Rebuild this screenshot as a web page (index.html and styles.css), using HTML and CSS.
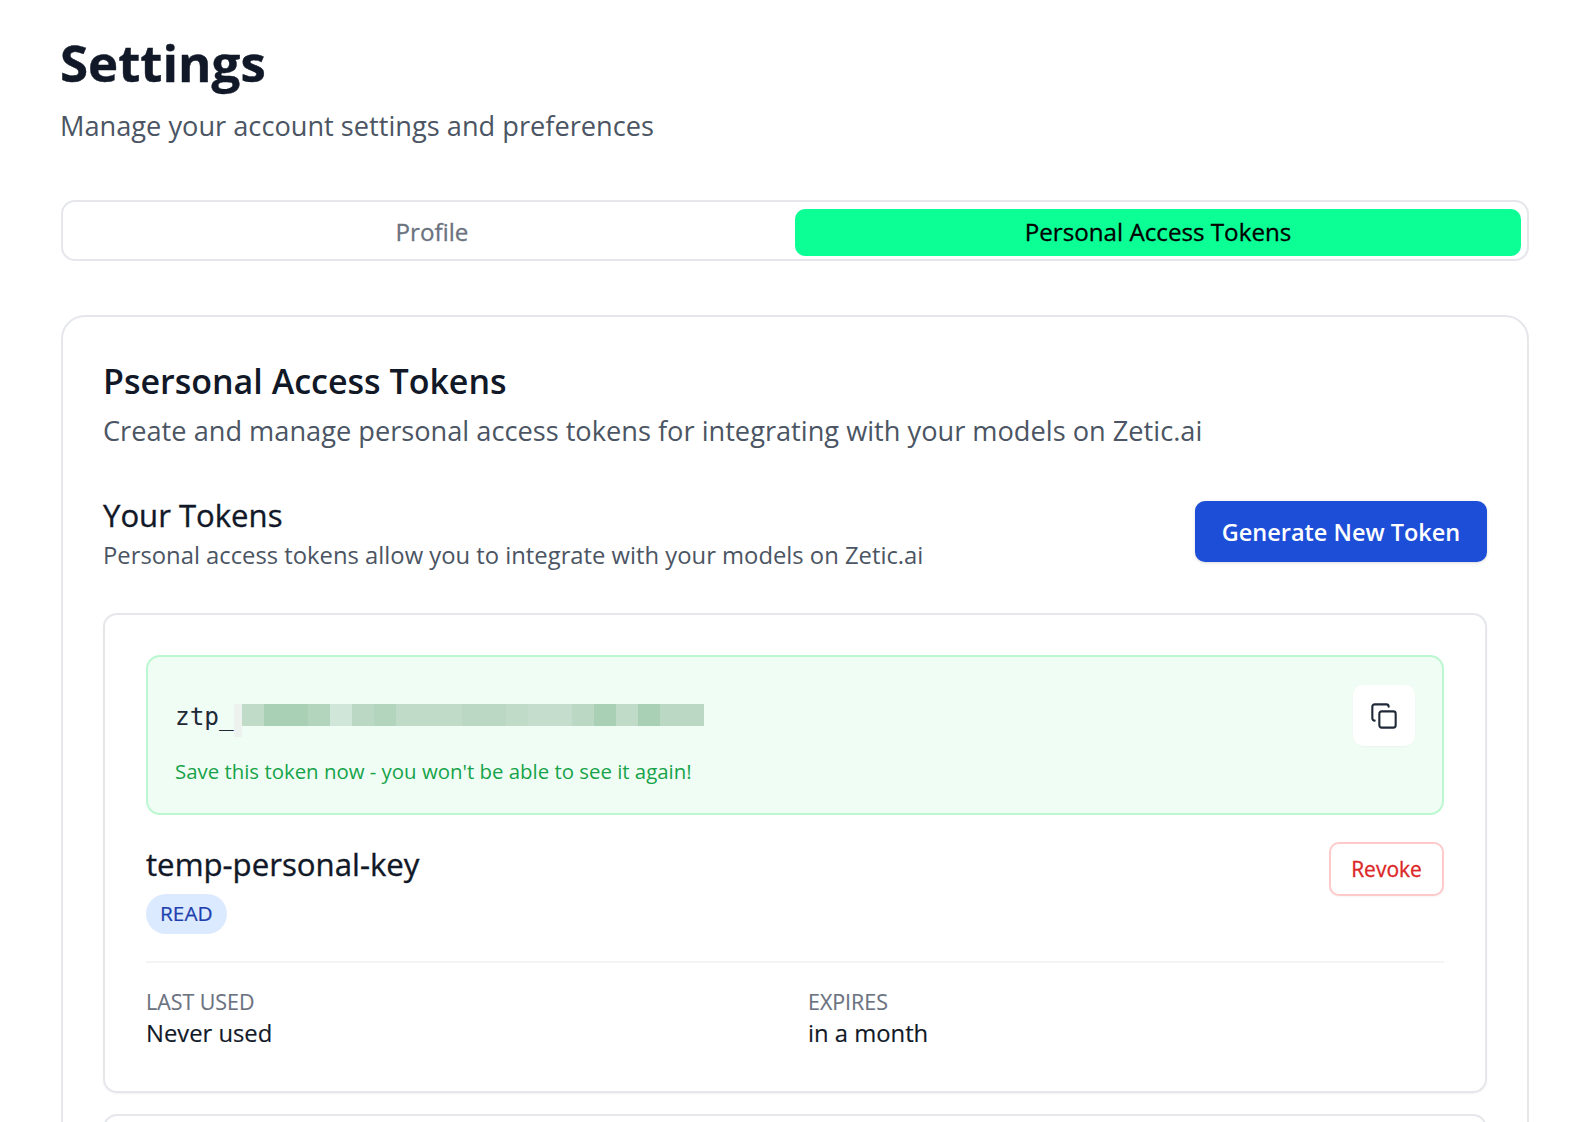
FILE: index.html
```html
<!DOCTYPE html>
<html lang="en">
<head>
<meta charset="utf-8">
<title>Settings</title>
<link rel="stylesheet" href="styles.css">
</head>
<body>
<main class="page">
  <header class="page-head">
    <h1 class="page-title">Settings</h1>
    <p class="page-sub">Manage your account settings and preferences</p>
  </header>
  <nav class="tabs">
    <button class="tab">Profile</button>
    <button class="tab tab-active">Personal Access Tokens</button>
  </nav>
  <section class="card">
    <h2 class="card-title">Psersonal Access Tokens</h2>
    <p class="card-sub">Create and manage personal access tokens for integrating with your models on Zetic.ai</p>
    <div class="tokens-head">
      <div>
        <h3 class="tokens-title">Your Tokens</h3>
        <p class="tokens-sub">Personal access tokens allow you to integrate with your models on Zetic.ai</p>
      </div>
      <button class="btn-primary">Generate New Token</button>
    </div>
    <article class="token">
      <div class="notice">
        <div class="notice-main">
          <div class="secret">
            <code class="secret-text">ztp_</code>
            <span class="mosaic-edge"></span>
            <span class="mosaic">
              <i class="c1"></i><i class="c2"></i><i class="c2"></i><i class="c3"></i><i class="c4"></i><i class="c5"></i><i class="c3"></i><i class="c1"></i><i class="c1"></i><i class="c1"></i><i class="c5"></i><i class="c5"></i><i class="c1"></i><i class="c6"></i><i class="c6"></i><i class="c5"></i><i class="c2"></i><i class="c1"></i><i class="c2"></i><i class="c5"></i><i class="c5"></i>
            </span>
          </div>
          <p class="notice-text">Save this token now - you won't be able to see it again!</p>
        </div>
        <button class="copy" aria-label="Copy">
          <svg class="copy-icon" viewBox="0 0 24 24" fill="none" stroke="currentColor" stroke-width="1.8" stroke-linecap="round" stroke-linejoin="round"><rect x="8" y="8" width="14" height="14" rx="2"/><path d="M4 16c-1.1 0-2-.9-2-2V4c0-1.1.9-2 2-2h10c1.1 0 2 .9 2 2"/></svg>
        </button>
      </div>
      <div class="token-head">
        <div>
          <h4 class="token-name">temp-personal-key</h4>
          <span class="badge">READ</span>
        </div>
        <button class="btn-revoke">Revoke</button>
      </div>
      <dl class="meta">
        <div><dt class="meta-label">LAST USED</dt><dd class="meta-value">Never used</dd></div>
        <div><dt class="meta-label">EXPIRES</dt><dd class="meta-value">in a month</dd></div>
      </dl>
    </article>
    <article class="token token-next"></article>
  </section>
</main>
</body>
</html>
```
FILE: styles.css
```css
* { box-sizing: border-box; }
html, body { margin: 0; height: 100%; overflow: hidden; background: #fff; }
body { font-family: "Open Sans", sans-serif; color: #111827; }
button { font-family: inherit; cursor: pointer; }
h1, h2, h3, h4, p, dl, dt, dd { margin: 0; }

.page { padding: 30px 61px 0; }
.page-title { font-size: 51px; line-height: 64px; font-weight: 700; color: #111827; margin-left: -1px; -webkit-text-stroke: .4px #111827; }
.page-sub { font-size: 27.2px; line-height: 40px; color: #4b5563; margin-top: 12px; margin-left: -1px; }

.tabs { display: flex; height: 61px; margin-top: 54px; padding: 7px 6px 3px; border: 2px solid #e5e7eb; border-radius: 14px; }
.tab { flex: 1; border: 0; padding: 0 0 2px; background: transparent; border-radius: 10px; font-size: 24.2px; font-weight: 400; color: #6b7280; -webkit-text-stroke: .3px #6b7280; }
.tab-active { background: #0bff95; color: #000; -webkit-text-stroke: .3px #000; }

.card { margin-top: 54px; padding: 40px 40px 0; border: 2px solid #e5e7eb; border-radius: 24px; height: 900px; }
.card-title { font-size: 34px; line-height: 48px; font-weight: 600; }
.card-sub { font-size: 27.2px; line-height: 40px; color: #4b5563; margin-top: 6px; }

.tokens-head { display: flex; justify-content: space-between; align-items: flex-start; margin-top: 42px; }
.tokens-title { font-size: 31.1px; line-height: 44px; font-weight: 400; -webkit-text-stroke: .35px #111827; }
.tokens-sub { font-size: 23.8px; line-height: 36px; color: #4b5563; }
.btn-primary { width: 292px; height: 61px; margin-top: 8px; border: 0; border-radius: 10px; background: #1d4ed8; color: #fff; font-size: 23.5px; font-weight: 600; box-shadow: 0 1px 3px rgba(0,0,0,.15); }

.token { margin-top: 40px; padding: 40px 41px 0; height: 480px; border: 2px solid #e5e7eb; border-radius: 14px; box-shadow: 0 1px 2px rgba(0,0,0,.05); }
.token-next { margin-top: 21px; }

.notice { display: flex; justify-content: space-between; height: 160px; padding: 28px 27px; border: 2px solid #bbf7d0; border-radius: 14px; background: #f0fdf4; }
.secret { display: flex; align-items: flex-start; height: 52px; }
.secret-text { font-family: "DejaVu Sans Mono", monospace; font-size: 24.4px; line-height: 40px; color: #1f2937; margin-top: 12px; }
.mosaic-edge { width: 8px; height: 33px; margin-top: 19px; background: #eef2ee; }
.mosaic { display: flex; width: 462px; height: 22px; margin-top: 19px; }
.mosaic i { flex: 1; }
.c1 { background: #c1dbc9; }
.c2 { background: #a9cfb4; }
.c3 { background: #b3d5bd; }
.c4 { background: #cfe6d8; }
.c5 { background: #bbd8c4; }
.c6 { background: #c5ddcd; }
.notice-text { font-size: 20.4px; line-height: 32px; color: #16a34a; margin-top: 18px; }
.copy { width: 62px; height: 61px; padding: 0; border: 0; border-radius: 10px; background: #fff; color: #1f2937; display: flex; align-items: center; justify-content: center; box-shadow: 0 1px 2px rgba(0,0,0,.03); }
.copy-icon { width: 28px; height: 28px; }

.token-head { display: flex; justify-content: space-between; align-items: flex-start; margin-top: 27px; padding-bottom: 27px; border-bottom: 2px solid #f3f4f6; }
.token-name { font-size: 31.2px; line-height: 44px; font-weight: 400; -webkit-text-stroke: .35px #111827; }
.badge { display: inline-block; margin-top: 8px; padding: 0 14px; height: 40px; line-height: 38px; border-radius: 20px; background: #dbeafe; color: #1e40af; font-size: 20.8px; -webkit-text-stroke: .2px #1e40af; }
.btn-revoke { width: 115px; height: 54px; padding: 0; border: 2px solid #fecaca; border-radius: 10px; background: #fff; color: #dc2626; font-size: 21px; font-weight: 400; -webkit-text-stroke: .3px #dc2626; box-shadow: 0 1px 2px rgba(0,0,0,.04); }

.meta { display: grid; grid-template-columns: 1fr 1fr; gap: 26px; margin-top: 24px; }
.meta-label { font-size: 21.4px; line-height: 30px; color: #6b7280; -webkit-text-stroke: .15px #6b7280; }
.meta-value { font-size: 23.8px; line-height: 30px; margin-top: 1px; color: #111827; -webkit-text-stroke: .15px #111827; }
```
